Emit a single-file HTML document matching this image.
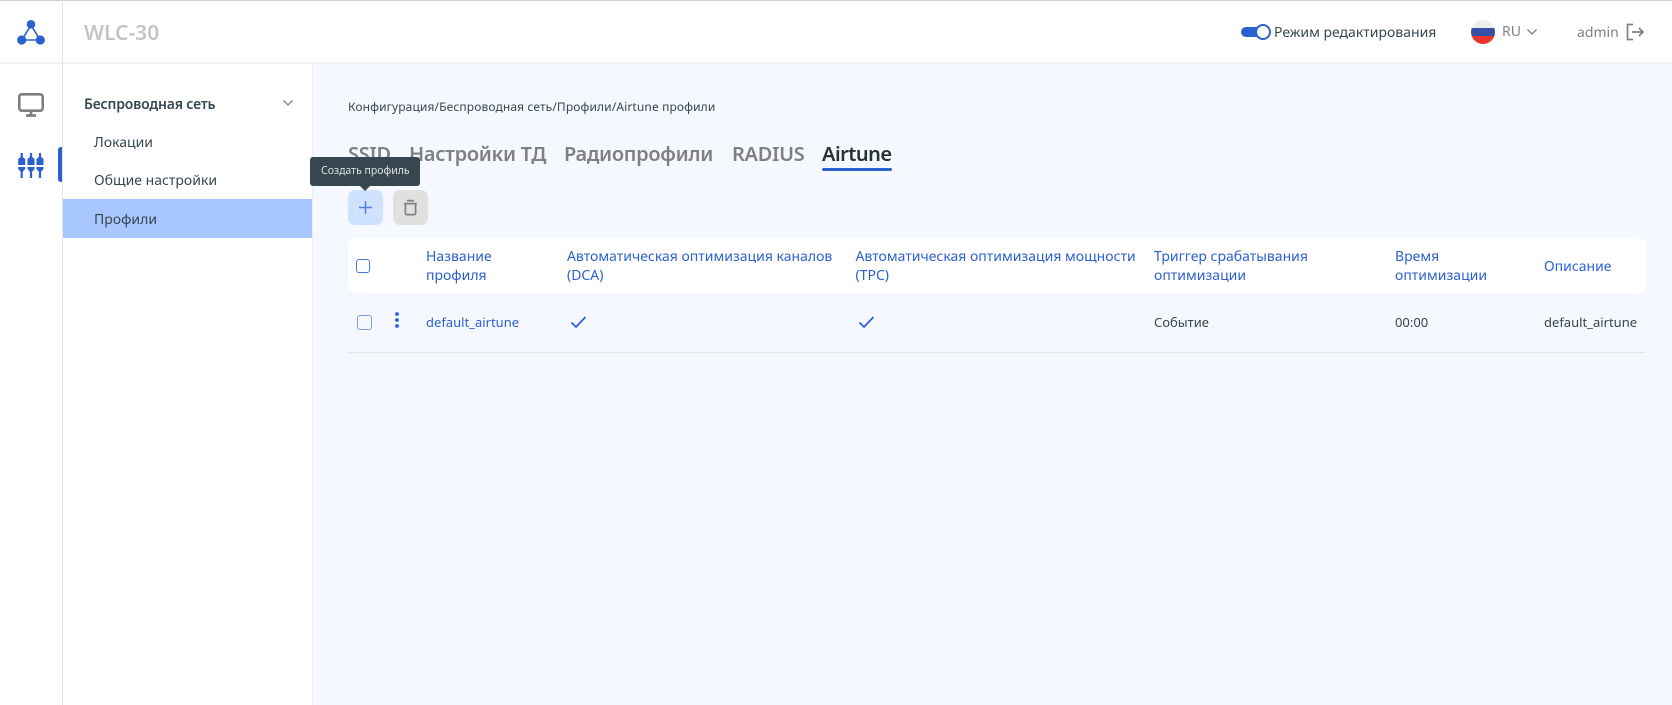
<!DOCTYPE html>
<html lang="ru"><head><meta charset="utf-8"><title>WLC-30</title>
<style>
html,body{margin:0;padding:0;width:1672px;height:705px;overflow:hidden;background:#fff}
body{position:relative;font-family:"Noto Sans","Liberation Sans","Noto Sans CJK SC",sans-serif;font-size:14px;color:#37474f}
div,span,svg{position:absolute;white-space:nowrap}
.h{color:#2b61cf;line-height:19px}
.t{font-size:20px;font-weight:600;color:#808080;top:140px;line-height:28px;letter-spacing:-.3px}
.c{font-size:13px;line-height:18px;top:313px}
</style></head><body>
<div style="left:0;top:0;width:1672px;height:1px;background:#d0d0d0"></div>
<div style="left:0;top:62px;width:1672px;height:2px;background:#f0f0f0"></div>
<div style="left:62px;top:0;width:1px;height:705px;background:#e6e6e6"></div>
<div style="left:63px;top:64px;width:249px;height:641px;background:#fff"></div>
<div style="left:313px;top:64px;width:1359px;height:641px;background:#f5f8ff"></div>
<div style="left:312px;top:64px;width:1px;height:641px;background:#ececf0"></div>

<svg style="left:16px;top:18px" width="30" height="28" viewBox="0 0 30 28"><path d="M15 7L6 22H24Z" fill="none" stroke="#2b61cf" stroke-width="1.6"/><circle cx="15" cy="6.3" r="4.3" fill="#2b61cf"/><circle cx="5.7" cy="22" r="4.6" fill="#2b61cf"/><circle cx="24.3" cy="22" r="4.6" fill="#2b61cf"/></svg>
<div style="left:84px;top:18px;font-size:21px;line-height:30px;font-weight:600;color:#c4c4c4">WLC-30</div>

<div style="left:1241px;top:27px;width:25px;height:10px;border-radius:5px;background:#2b61cf"></div>
<div style="left:1255px;top:24px;width:12px;height:12px;border-radius:50%;background:#fff;border:2px solid #2b61cf"></div>
<div style="left:1274px;top:23px;line-height:20px;font-size:14px;color:#37474f">Режим редактирования</div>
<div style="left:1471px;top:20px;width:24px;height:24px;border-radius:50%;overflow:hidden;background:#eee"><div style="left:0;top:8px;width:24px;height:8px;background:#3652a8"></div><div style="left:0;top:16px;width:24px;height:8px;background:#e8352e"></div></div>
<div style="left:1502px;top:22px;line-height:20px;color:#808080">RU</div>
<svg style="left:1526px;top:28px" width="12" height="8" viewBox="0 0 12 8"><path d="M1.5 1.5L6 6L10.5 1.5" fill="none" stroke="#808080" stroke-width="1.4"/></svg>
<div style="left:1577px;top:23px;line-height:20px;color:#808080">admin</div>
<svg style="left:1625px;top:22px" width="20" height="20" viewBox="0 0 20 20"><path d="M8 2.5H2.5V17.5H8M7 10H18M14 6L18 10L14 14" fill="none" stroke="#808080" stroke-width="1.7"/></svg>

<svg style="left:18px;top:93px" width="26" height="24" viewBox="0 0 26 24"><rect x="1.3" y="1.3" width="23.4" height="16.4" rx="2.5" fill="none" stroke="#808080" stroke-width="2.6"/><path d="M13 18V22M8 22.5H18" stroke="#808080" stroke-width="2.8"/></svg>
<svg style="left:18px;top:153px" width="26" height="25" viewBox="0 0 26 25" fill="#2b61cf"><path d="M3.7 0V4M13 0V4M22 0V4M3.7 18V25M13 18V25M22 18V25" stroke="#2b61cf" stroke-width="2.2"/><path d="M.2 6L3.7 3L7.2 6V12H.2ZM9.5 6L13 3L16.5 6V12H9.5ZM18.5 6L22 3L25.5 6V12H18.5ZM.2 14H7.2V16L3.7 20L.2 16ZM9.5 14H16.5V16L13 20L9.5 16ZM18.5 14H25.5V16L22 20L18.5 16Z"/></svg>
<div style="left:58px;top:147px;width:4px;height:35px;border-radius:3px 0 0 3px;background:#2b61cf"></div>

<div style="left:84px;top:94px;line-height:21px;font-weight:600;color:#37474f;letter-spacing:-.18px">Беспроводная сеть</div>
<svg style="left:282px;top:99px" width="12" height="8" viewBox="0 0 12 8"><path d="M1.5 1.5L6 6L10.5 1.5" fill="none" stroke="#808080" stroke-width="1.3"/></svg>
<div style="left:94px;top:133px;line-height:20px">Локации</div>
<div style="left:94px;top:171px;line-height:20px">Общие настройки</div>
<div style="left:63px;top:199px;width:249px;height:39px;background:#a9c7ff"></div>
<div style="left:94px;top:210px;line-height:20px">Профили</div>

<div style="left:348px;top:98px;font-size:12px;line-height:18px;color:#37474f;letter-spacing:.12px">Конфигурация/Беспроводная сеть/Профили/Airtune профили</div>
<div class="t" style="left:348px">SSID</div>
<div class="t" style="left:409px">Настройки ТД</div>
<div class="t" style="left:564px">Радиопрофили</div>
<div class="t" style="left:732px">RADIUS</div>
<div class="t" style="left:822px;color:#263238;letter-spacing:-.5px">Airtune</div>
<div style="left:822px;top:167.5px;width:70px;height:3px;border-radius:2px;background:#2b61cf"></div>

<div style="left:348px;top:190px;width:35px;height:35px;border-radius:7px;background:#cfe2ff"></div>
<svg style="left:358px;top:200px" width="15" height="15" viewBox="0 0 15 15"><path d="M7.5 1V14M1 7.5H14" stroke="#4a7ee0" stroke-width="1.4"/></svg>
<div style="left:393px;top:190px;width:35px;height:35px;border-radius:7px;background:#e0e0e0"></div>
<svg style="left:403px;top:199px" width="15" height="17" viewBox="0 0 15 17"><path d="M4 1.6H11M1.2 4.6H13.8M2.4 4.6V14.2a1.4 1.4 0 0 0 1.4 1.4H11.2a1.4 1.4 0 0 0 1.4-1.4V4.6" fill="none" stroke="#808080" stroke-width="1.7"/></svg>

<div style="left:310px;top:157px;width:110px;height:29px;border-radius:3px;background:#37474f"></div>
<div style="left:360px;top:186px;width:0;height:0;border-left:5px solid transparent;border-right:5px solid transparent;border-top:5px solid #37474f"></div>
<div style="left:321px;top:162px;font-size:10.5px;line-height:18px;color:#dfe3e5">Создать профиль</div>

<div style="left:348px;top:238px;width:1298px;height:55px;border-radius:8px;background:#fff"></div>
<div style="left:348px;top:352px;width:1298px;height:1px;background:#e2e5ea"></div>
<div style="left:356px;top:259px;width:12px;height:12px;border:1.5px solid #4a78d6;border-radius:3px"></div>
<div style="left:357px;top:315px;width:12.5px;height:12.5px;border:1.5px solid #7d9fe2;border-radius:3px"></div>
<svg style="left:393px;top:311px" width="8" height="20" viewBox="0 0 8 20" fill="#2b61cf"><circle cx="4" cy="3" r="1.9"/><circle cx="4" cy="9" r="1.9"/><circle cx="4" cy="15" r="1.9"/></svg>
<div class="h" style="left:426px;top:247px">Название<br>профиля</div>
<div class="h" style="left:567px;top:247px">Автоматическая оптимизация каналов<br>(DCA)</div>
<div class="h" style="left:855.5px;top:247px">Автоматическая оптимизация мощности<br>(TPC)</div>
<div class="h" style="left:1154px;top:247px">Триггер срабатывания<br>оптимизации</div>
<div class="h" style="left:1395px;top:247px">Время<br>оптимизации</div>
<div class="h" style="left:1544px;top:257px">Описание</div>
<div class="c" style="left:426px;color:#2b61cf">default_airtune</div>
<svg style="left:570px;top:315px" width="17" height="14" viewBox="0 0 17 14"><path d="M1.5 7.5L6 12L15.5 2" fill="none" stroke="#2b61cf" stroke-width="1.8"/></svg>
<svg style="left:858px;top:315px" width="17" height="14" viewBox="0 0 17 14"><path d="M1.5 7.5L6 12L15.5 2" fill="none" stroke="#2b61cf" stroke-width="1.8"/></svg>
<div class="c" style="left:1154px">Событие</div>
<div class="c" style="left:1395px">00:00</div>
<div class="c" style="left:1544px">default_airtune</div>
</body></html>
